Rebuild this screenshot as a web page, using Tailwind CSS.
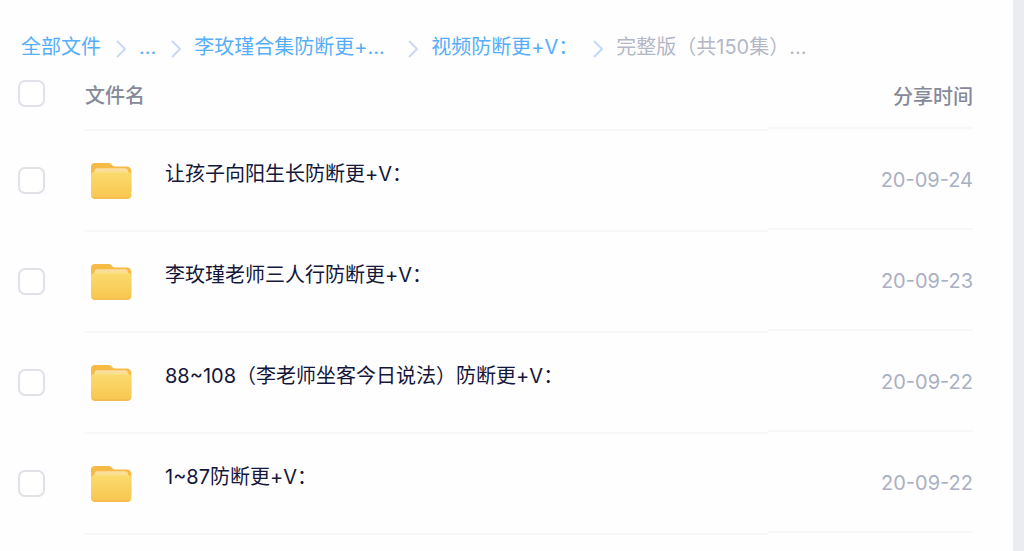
<!doctype html>
<html lang="zh-CN">

<head>
    <meta charset="UTF-8">
    <meta name="viewport" content="width=device-width, initial-scale=1.0">
    <script src="https://cdn.jsdelivr.net/npm/@tailwindcss/browser@4"></script>
    <title>全部文件</title>
</head>

<body class="flex min-h-screen overflow-hidden bg-[#fefefe] font-['Inter','Noto_Sans_CJK_SC',sans-serif] text-[20px] leading-[30px] text-[#14163a]">
    <!-- Icons shared by the rows and the breadcrumb -->
    <svg class="size-0" aria-hidden="true">
        <defs>
            <linearGradient id="folderFront" x1="0" y1="0" x2="0" y2="1">
                <stop offset="0" stop-color="#fadb6e" />
                <stop offset="1" stop-color="#f8c650" />
            </linearGradient>
            <linearGradient id="folderPaper" x1="0" y1="0" x2="0" y2="1">
                <stop offset="0" stop-color="#fbdda6" />
                <stop offset="1" stop-color="#fae08a" />
            </linearGradient>
        </defs>
        <symbol id="folder" viewBox="0 0 42 38">
            <path d="M1 5a4 4 0 0 1 4-4h13c1.5 0 2.300.4 3.300 1.300l1.600 1.400c.6.5 1.200.7 2 .7H37a4.300 4.300 0 0 1 4.300 4.300V30H1z" fill="#f6ba45" />
            <path d="M1 14c0-2.500 1.300-4 3.500-4.300h33.300c2.200.3 3.500 1.800 3.500 4.300V33a3.700 3.700 0 0 1-3.700 3.700H4.700A3.700 3.700 0 0 1 1 33z" fill="url(#folderFront)" />
            <path d="M4.500 10.500V9.300a3 3 0 0 1 3-3h27.500a3 3 0 0 1 3 3v1.200z" fill="url(#folderPaper)" />
            <path d="M1.300 34.200A3.700 3.700 0 0 0 4.700 36.700h32.900a3.700 3.700 0 0 0 3.400-2.500c-.8.9-1.900 1.300-3.400 1.300H4.700c-1.500 0-2.600-.4-3.400-1.300z" fill="#f3b649" />
        </symbol>
        <symbol id="chevron" viewBox="0 0 10 18">
            <path d="M1 1l8 8-8 8" fill="none" stroke="currentColor" stroke-width="2" />
        </symbol>
    </svg>

    <main class="min-w-0 flex-1 pl-[18px] pr-[40px] pt-8">
        <!-- Breadcrumb -->
        <nav aria-label="路径" class="pl-[3px]">
            <ol class="flex items-center whitespace-nowrap text-[#57aef8]">
                <li><a href="#">全部文件</a></li>
                <li class="flex items-center">
                    <svg class="ml-[15px] mr-[13px] mt-1 h-[18px] w-[10px] text-[#cdd8f5]"><use href="#chevron" /></svg>
                    <a href="#">...</a>
                </li>
                <li class="flex items-center">
                    <svg class="ml-[15px] mr-[13px] mt-1 h-[18px] w-[10px] text-[#cdd8f5]"><use href="#chevron" /></svg>
                    <a href="#" class="w-[199px]">李玫瑾合集防断更+...</a>
                </li>
                <li class="flex items-center">
                    <svg class="ml-[15px] mr-[13px] mt-1 h-[18px] w-[10px] text-[#cdd8f5]"><use href="#chevron" /></svg>
                    <a href="#">视频防断更+V：</a>
                </li>
                <li class="flex items-center">
                    <svg class="ml-[15px] mr-[13px] mt-1 h-[18px] w-[10px] text-[#c3d8fa]"><use href="#chevron" /></svg>
                    <span class="text-[#b4b8c6]" aria-current="page">完整版（共150集）...</span>
                </li>
            </ol>
        </nav>

        <!-- File list -->
        <table class="w-full table-fixed text-left">
            <thead>
                <tr class="align-top text-[#858a9b]">
                    <th class="w-[67px] p-0 pt-[18px]">
                        <input type="checkbox" aria-label="全选" class="block size-[27px] appearance-none rounded-[7px] border-2 border-[#e0e1e9] bg-white">
                    </th>
                    <th class="p-0 font-medium">
                        <div class="h-[69px] border-b-2 border-[#f8f8f9] pt-[19px]">文件名</div>
                    </th>
                    <th class="w-[205px] p-0 text-right font-medium">
                        <div class="h-[67px] border-b-2 border-[#f8f8f9] pt-[20px]">分享时间</div>
                    </th>
                </tr>
            </thead>
            <tbody>
                <tr class="align-top">
                    <td class="p-0 pt-9">
                        <input type="checkbox" id="file1" class="block size-[27px] appearance-none rounded-[7px] border-2 border-[#e0e1e9] bg-white">
                    </td>
                    <td class="p-0">
                        <div class="flex h-[101px] items-start border-b-2 border-[#f8f8f9] pl-[5px] pt-7">
                            <svg class="mt-[3px] h-[38px] w-[42px]"><use href="#folder" /></svg>
                            <label for="file1" class="pl-[33px]">让孩子向阳生长防断更+V：</label>
                        </div>
                    </td>
                    <td class="p-0 text-right text-[#aab0c3]">
                        <div class="h-[99px] border-b-2 border-[#f8f8f9] pt-[34px]">20-09-24</div>
                    </td>
                </tr>
                <tr class="align-top">
                    <td class="p-0 pt-9">
                        <input type="checkbox" id="file2" class="block size-[27px] appearance-none rounded-[7px] border-2 border-[#e0e1e9] bg-white">
                    </td>
                    <td class="p-0">
                        <div class="flex h-[101px] items-start border-b-2 border-[#f8f8f9] pl-[5px] pt-7">
                            <svg class="mt-[3px] h-[38px] w-[42px]"><use href="#folder" /></svg>
                            <label for="file2" class="pl-[33px]">李玫瑾老师三人行防断更+V：</label>
                        </div>
                    </td>
                    <td class="p-0 text-right text-[#aab0c3]">
                        <div class="h-[99px] border-b-2 border-[#f8f8f9] pt-[34px]">20-09-23</div>
                    </td>
                </tr>
                <tr class="align-top">
                    <td class="p-0 pt-9">
                        <input type="checkbox" id="file3" class="block size-[27px] appearance-none rounded-[7px] border-2 border-[#e0e1e9] bg-white">
                    </td>
                    <td class="p-0">
                        <div class="flex h-[101px] items-start border-b-2 border-[#f8f8f9] pl-[5px] pt-7">
                            <svg class="mt-[3px] h-[38px] w-[42px]"><use href="#folder" /></svg>
                            <label for="file3" class="pl-[33px]">88~108（李老师坐客今日说法）防断更+V：</label>
                        </div>
                    </td>
                    <td class="p-0 text-right text-[#aab0c3]">
                        <div class="h-[99px] border-b-2 border-[#f8f8f9] pt-[34px]">20-09-22</div>
                    </td>
                </tr>
                <tr class="align-top">
                    <td class="p-0 pt-9">
                        <input type="checkbox" id="file4" class="block size-[27px] appearance-none rounded-[7px] border-2 border-[#e0e1e9] bg-white">
                    </td>
                    <td class="p-0">
                        <div class="flex h-[101px] items-start border-b-2 border-[#f8f8f9] pl-[5px] pt-7">
                            <svg class="mt-[3px] h-[38px] w-[42px]"><use href="#folder" /></svg>
                            <label for="file4" class="pl-[33px]">1~87防断更+V：</label>
                        </div>
                    </td>
                    <td class="p-0 text-right text-[#aab0c3]">
                        <div class="h-[99px] border-b-2 border-[#f8f8f9] pt-[34px]">20-09-22</div>
                    </td>
                </tr>
            </tbody>
        </table>
    </main>

    <!-- Page edge -->
    <div class="w-[11px] shrink-0 bg-[#ebecf1]"></div>
</body>

</html>
